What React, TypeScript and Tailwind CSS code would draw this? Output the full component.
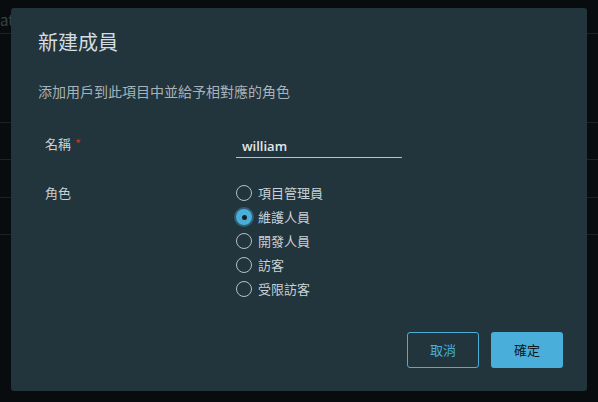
import { useState } from "react";

const roles = ["項目管理員", "維護人員", "開發人員", "訪客", "受限訪客"];

const font = { fontFamily: '"Noto Sans CJK TC", "Noto Sans", sans-serif' };

function Backdrop() {
  return (
    <div className="absolute inset-0 bg-[#080c0f]">
      <div className="h-[34px] border-b border-[#1c2226] pl-0 text-[15px] leading-[40px] text-[#3a4348]">at</div>
      <div className="h-[89px] border-b border-[#1c2226]" />
      <div className="h-[37px] border-b border-[#1c2226]" />
      <div className="h-[38px] border-b border-[#1c2226]" />
      <div className="h-[37px] border-b border-[#1c2226]" />
    </div>
  );
}

export default function App() {
  const [role, setRole] = useState("維護人員");
  const [name, setName] = useState("william");

  return (
    <div className="relative h-[402px] w-[598px] overflow-hidden" style={font}>
      <Backdrop />
      <div className="absolute left-[11px] top-[8px] flex h-[383px] w-[576px] flex-col rounded-[3px] bg-[#22343c] pl-[27px] pr-[24px]">
        <h2 className="mt-[19px] text-[20px] leading-[30px] text-[#d5dde0]">新建成員</h2>
        <p className="mt-[24px] text-[14px] leading-[20px] text-[#a7b3b9]">添加用戶到此項目中並給予相對應的角色</p>

        <div className="mt-[33px] flex items-start">
          <div className="w-[198px] pl-[7px] text-[13px] leading-[20px] text-[#c9d2d6]">
            名稱 <span className="ml-[1px] text-[#c0392b]">*</span>
          </div>
          <div className="mt-[2px] w-[166px] border-b border-[#b9c4c9] pb-[1px]">
            <input
              value={name}
              onChange={(e) => setName(e.target.value)}
              className="block w-full bg-transparent px-[6px] text-[13px] font-semibold leading-[20px] text-[#e3e8ea] outline-none"
              style={{ fontFamily: '"Open Sans", "Noto Sans", sans-serif' }}
            />
          </div>
        </div>

        <div className="mt-[23px] flex items-start">
          <div className="w-[198px] pl-[7px] text-[13px] leading-[24px] text-[#c9d2d6]">角色</div>
          <div className="flex flex-col">
            {roles.map((r) => {
              const on = r === role;
              return (
                <label key={r} className="flex h-[24px] cursor-pointer items-center" onClick={() => setRole(r)}>
                  {on ? (
                    <span className="flex h-[16px] w-[16px] items-center justify-center rounded-full bg-[#4aaedb] shadow-[0_0_0_2px_rgba(74,174,219,0.35)]">
                      <span className="h-[5px] w-[5px] rounded-full bg-[#13222a]" />
                    </span>
                  ) : (
                    <span className="h-[16px] w-[16px] rounded-full border-[1.5px] border-[#b5c0c5]" />
                  )}
                  <span className="ml-[6px] text-[13px] leading-[20px] text-[#c9d2d6]">{r}</span>
                </label>
              );
            })}
          </div>
        </div>

        <div className="mt-auto mb-[23px] flex justify-end gap-[12px]">
          <button className="h-[36px] w-[72px] rounded-[3px] border border-[#4aaedb] text-[13px] text-[#4aaedb]">取消</button>
          <button className="h-[36px] w-[72px] rounded-[3px] bg-[#4aaedb] text-[13px] text-[#0d1a20]">確定</button>
        </div>
      </div>
    </div>
  );
}
